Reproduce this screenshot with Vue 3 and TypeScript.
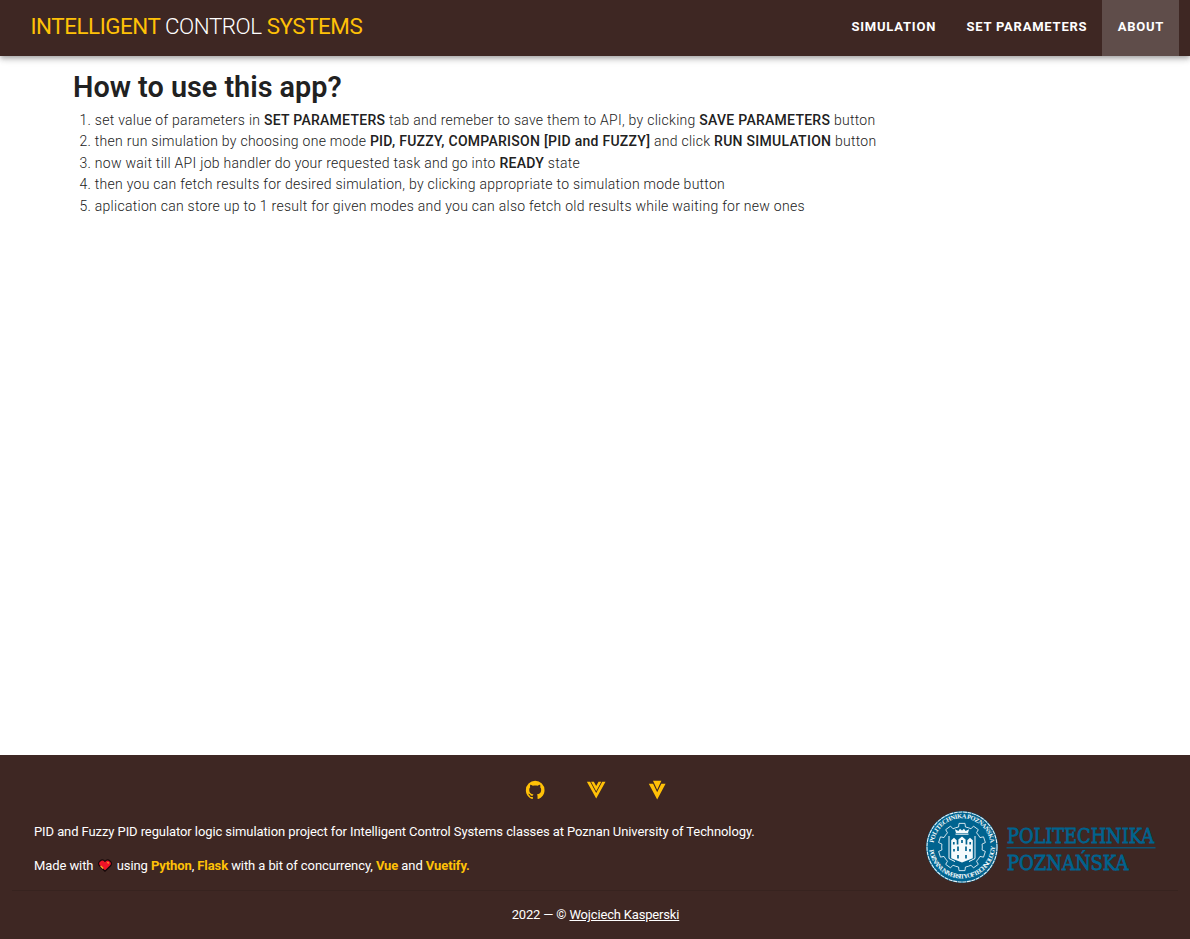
<script setup lang="ts">
interface Segment {
  text: string
  strong?: boolean
}

const tabs: { label: string; active: boolean }[] = [
  { label: 'SIMULATION', active: false },
  { label: 'SET PARAMETERS', active: false },
  { label: 'ABOUT', active: true },
]

const steps: Segment[][] = [
  [
    { text: 'set value of parameters in ' },
    { text: 'SET PARAMETERS', strong: true },
    { text: ' tab and remeber to save them to API, by clicking ' },
    { text: 'SAVE PARAMETERS', strong: true },
    { text: ' button' },
  ],
  [
    { text: 'then run simulation by choosing one mode ' },
    { text: 'PID, FUZZY, COMPARISON [PID and FUZZY]', strong: true },
    { text: ' and click ' },
    { text: 'RUN SIMULATION', strong: true },
    { text: ' button' },
  ],
  [
    { text: 'now wait till API job handler do your requested task and go into ' },
    { text: 'READY', strong: true },
    { text: ' state' },
  ],
  [{ text: 'then you can fetch results for desired simulation, by clicking appropriate to simulation mode button' }],
  [{ text: 'aplication can store up to 1 result for given modes and you can also fetch old results while waiting for new ones' }],
]

const icons: { name: string; path: string }[] = [
  {
    name: 'GitHub',
    path: 'M12,2A10,10 0 0,0 2,12C2,16.42 4.87,20.17 8.84,21.5C9.34,21.58 9.5,21.27 9.5,21C9.5,20.77 9.5,20.14 9.5,19.31C6.73,19.91 6.14,17.97 6.14,17.97C5.68,16.81 5.03,16.5 5.03,16.5C4.12,15.88 5.1,15.9 5.1,15.9C6.1,15.97 6.63,16.93 6.63,16.93C7.5,18.45 8.97,18 9.54,17.76C9.63,17.11 9.89,16.67 10.17,16.42C7.95,16.17 5.62,15.31 5.62,11.5C5.62,10.39 6,9.5 6.65,8.79C6.55,8.54 6.2,7.5 6.75,6.15C6.75,6.15 7.59,5.88 9.5,7.17C10.29,6.95 11.15,6.84 12,6.84C12.85,6.84 13.71,6.95 14.5,7.17C16.41,5.88 17.25,6.15 17.25,6.15C17.8,7.5 17.45,8.54 17.35,8.79C18,9.5 18.38,10.39 18.38,11.5C18.38,15.32 16.04,16.16 13.81,16.41C14.17,16.72 14.5,17.33 14.5,18.26C14.5,19.6 14.5,20.68 14.5,21C14.5,21.27 14.66,21.59 15.17,21.5C19.14,20.16 22,16.42 22,12A10,10 0 0,0 12,2Z',
  },
  { name: 'Vue', path: 'M2,3H5.5L12,15L18.5,3H22L12,21L2,3M6.5,3H9.5L12,7.58L14.5,3H17.5L12,13.08L6.5,3Z' },
  { name: 'Vuetify', path: 'M7.5,2H16.5L12,11.5L7.5,2M3,5H7.6L12,14.3L16.4,5H21L12,22L3,5Z' },
]

function gearOutline(teeth: number, inner: number, outer: number): string {
  const points: string[] = []
  const pitch = (Math.PI * 2) / teeth
  const profile: [number, number][] = [
    [-0.27, inner],
    [-0.2, outer],
    [0.2, outer],
    [0.27, inner],
    [0.5, inner],
  ]
  for (let i = 0; i < teeth; i++) {
    for (const [offset, radius] of profile) {
      const angle = (i + offset) * pitch - Math.PI / 2
      points.push(`${(37 + radius * Math.cos(angle)).toFixed(2)} ${(37 + radius * Math.sin(angle)).toFixed(2)}`)
    }
  }
  return `M${points.join('L')}Z`
}

const gear: string = gearOutline(10, 20.3, 23.8)
</script>

<template>
  <div class="page">
    <header class="bar">
      <h1 class="brand"><span class="accent">INTELLIGENT</span> <span class="light">CONTROL</span> <span class="accent">SYSTEMS</span></h1>
      <nav class="tabs">
        <a v-for="tab in tabs" :key="tab.label" class="tab" :class="{ active: tab.active }">{{ tab.label }}</a>
      </nav>
    </header>

    <main class="content">
      <h2 class="heading">How to use this app?</h2>
      <ol class="steps">
        <li v-for="(step, i) in steps" :key="i"><template v-for="(part, j) in step" :key="j"><strong v-if="part.strong">{{ part.text }}</strong><template v-else>{{ part.text }}</template></template></li>
      </ol>
    </main>

    <footer class="footer">
      <div class="links">
        <svg v-for="icon in icons" :key="icon.name" class="icon" viewBox="0 0 24 24"><path :d="icon.path" /></svg>
      </div>
      <div class="info">
        <div class="about">
          <p>PID and Fuzzy PID regulator logic simulation project for Intelligent Control Systems classes at Poznan University of Technology.</p>
          <p>Made with <svg class="heart" viewBox="0 0 14 13"><path d="M7 12.2 1.2 6.5C-1 3.2 3.8-1 7 2.3 10.2-1 15 3.2 12.8 6.5Z" fill="#f01428" stroke="#17090a" stroke-width="1.2" /><path d="M9.5 3.2l1.2 1.2M2.6 7.1l2.6 2.4" stroke="#ffae25" stroke-width="1.3" /></svg> using <b>Python</b>, <b>Flask</b> with a bit of concurrency, <b>Vue</b> and <b>Vuetify.</b></p>
        </div>
        <svg class="logo" viewBox="0 0 232 74">
          <defs>
            <path id="arc-top" d="M8.7 41A28.6 28.6 0 1 1 65.3 41" />
            <path id="arc-bottom" d="M4.1 38A33 33 0 0 0 69.9 38" />
          </defs>
          <circle cx="37" cy="37" r="36" fill="#00638f" />
          <circle cx="37" cy="37" r="35" fill="none" stroke="#e6f1f6" stroke-width="1.1" stroke-dasharray="4 .6" />
          <g fill="#f4fafc" font-size="6.4" font-weight="700" font-family="Liberation Serif, serif">
            <text textLength="82"><textPath href="#arc-top" startOffset="8">POLITECHNIKA POZNAŃSKA</textPath></text>
            <text textLength="98"><textPath href="#arc-bottom" startOffset="2">POZNAN UNIVERSITY OF TECHNOLOGY</textPath></text>
          </g>
          <path :d="gear" fill="none" stroke="#e6f1f6" stroke-width=".9" />
          <g fill="#f4fafc">
            <path d="M31 23 29.9 19.3 33.4 21 35 18.8 37 20.6 39 18.8 40.6 21 44.1 19.3 43 23Z" />
            <path d="M30.5 23.6h13v1.1h-13z" />
            <path d="M26.2 30.2 29 27.7l2.7 2.5v4.2h1.7v-4.8L37 26.4l3.6 3.2v4.8h1.7v-4.2l2.7-2.5 2.8 2.5v18l-5.1 2.1L37 52.6l-5.7-2.3-5.1-2.1Z" />
          </g>
          <path d="M24 26v22.5L30 51.6M50 26v22.5L44 51.6" fill="none" stroke="#f4fafc" stroke-width="1" />
          <path d="M28.8 32v2.5M45.2 32v2.5M37 30v3M33 36.5v4.5M41 36.5v4.5M29 39v2.5M45 39v2.5M33 45v3.5M41 45v3.5" stroke="#00638f" stroke-width="1.7" />
          <g fill="#00638f" class="wordmark">
            <text x="82" y="32.6" textLength="147" lengthAdjust="spacingAndGlyphs">POLITECHNIKA</text>
            <text x="82" y="59.8" textLength="121.5" lengthAdjust="spacingAndGlyphs">POZNAŃSKA</text>
            <path d="M81.5 37h149v1.5h-149z" opacity=".75" stroke="none" />
          </g>
        </svg>
      </div>
      <hr class="divider" />
      <p class="copyright">2022 — © <a>Wojciech Kasperski</a></p>
    </footer>
  </div>
</template>

<style>
html,
body {
  margin: 0;
  background: #fff;
}
</style>

<style scoped>
.page {
  display: flex;
  flex-direction: column;
  height: 939px;
  font-family: Roboto, 'Liberation Sans', sans-serif;
  color: #212121;
}
.bar {
  display: flex;
  justify-content: space-between;
  height: 56px;
  flex: none;
  padding: 0 11px 0 30.5px;
  box-sizing: border-box;
  background: #3e2723;
  box-shadow: 0 2px 4px -1px rgba(0, 0, 0, 0.2), 0 4px 5px rgba(0, 0, 0, 0.14), 0 1px 10px rgba(0, 0, 0, 0.12);
}
.brand {
  margin: 0;
  font-size: 22.4px;
  line-height: 53px;
  font-weight: 400;
  letter-spacing: -0.47px;
  color: #fff;
  white-space: nowrap;
}
.accent {
  color: #ffc107;
}
.light {
  font-weight: 300;
}
.tabs {
  display: flex;
}
.tab {
  padding: 0 14.8px 0 15.5px;
  font-size: 13px;
  line-height: 54px;
  font-weight: 700;
  letter-spacing: 0.78px;
  color: #fff;
  white-space: nowrap;
}
.tab.active {
  background: #5f4d4a;
}
.content {
  flex: 1;
  padding: 13px 73px 0;
}
.heading {
  margin: 0;
  font-size: 28.8px;
  line-height: 36px;
  font-weight: 600;
}
.steps {
  margin: 4.6px 0 0;
  padding-left: 21.8px;
  font-size: 14px;
  line-height: 21.5px;
  font-weight: 300;
  letter-spacing: 0.27px;
  white-space: nowrap;
}
.steps strong {
  font-weight: 500;
}
.footer {
  height: 184px;
  flex: none;
  background: #3e2723;
  color: #fff;
  font-size: 13px;
  letter-spacing: -0.17px;
}
.links {
  display: flex;
  justify-content: center;
  gap: 38.6px;
  padding: 23.7px 0 0 2px;
  height: 31.3px;
}
.icon {
  width: 22.4px;
  height: 22.4px;
  fill: #ffc107;
}
.info {
  display: flex;
  justify-content: space-between;
  height: 80px;
  padding: 0 33px 0 34px;
}
.about {
  padding-top: 12px;
  letter-spacing: -0.09px;
}
.about p {
  margin: 0 0 14px;
  line-height: 20px;
}
.about b {
  font-weight: 700;
  color: #ffc107;
}
.heart {
  width: 14px;
  height: 13px;
  margin: 0 2px 0 1px;
  vertical-align: -2px;
}
.logo {
  width: 232px;
  height: 74px;
  flex: none;
  overflow: visible;
}
.wordmark {
  font-family: 'DejaVu Serif', serif;
  font-size: 21px;
  font-weight: 400;
  stroke: #00638f;
  stroke-width: 0.8px;
  letter-spacing: 0;
}
.divider {
  margin: 0 12px;
  border: 0;
  border-top: 1px solid #37231f;
}
.copyright {
  margin: 14px 0 0;
  padding-left: 1px;
  line-height: 20px;
  text-align: center;
}
.copyright a {
  text-decoration: underline;
}
</style>
